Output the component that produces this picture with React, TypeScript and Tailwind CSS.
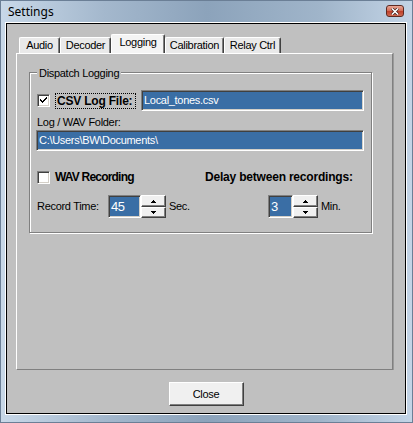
import React from 'react'

// sunken 3D edge used by edit boxes and check boxes
const sunken =
  'border border-t-[#808080] border-l-[#808080] border-b-white border-r-white shadow-[inset_1px_1px_0_#404040,inset_-1px_-1px_0_#d4d0c8]'

// raised 3D edge used by buttons
const raised =
  'border border-t-white border-l-white border-b-[#404040] border-r-[#404040] shadow-[inset_-1px_-1px_0_#808080]'

function CheckBox({ checked }: { checked?: boolean }) {
  return (
    <div className={`w-[13px] h-[13px] bg-white ${sunken} flex items-center justify-center shrink-0`}>
      {checked && (
        <svg width="9" height="9" viewBox="0 0 9 9" shapeRendering="crispEdges">
          <path d="M1 3h1v1h1v1h1V4h1V3h1V2h1V1h1v2H7v1H6v1H5v1H4v1H3V6H2V5H1z" fill="#000" />
        </svg>
      )}
    </div>
  )
}

function Spin() {
  return (
    <div className="flex flex-col w-[25px] h-[23px] shrink-0">
      <div className={`h-[12px] bg-[#f0f0f0] ${raised} flex items-center justify-center`}>
        <svg width="5" height="3" viewBox="0 0 5 3" shapeRendering="crispEdges">
          <path d="M2 0h1v1h1v1h1v1H0V2h1V1h1z" fill="#000" />
        </svg>
      </div>
      <div className={`h-[11px] bg-[#f0f0f0] ${raised} flex items-center justify-center`}>
        <svg width="5" height="3" viewBox="0 0 5 3" shapeRendering="crispEdges">
          <path d="M0 0h5v1H4v1H3v1H2V2H1V1H0z" fill="#000" />
        </svg>
      </div>
    </div>
  )
}

function Tab({ label, width, selected }: { label: string; width: string; selected?: boolean }) {
  return (
    <div
      className={`${width} ${
        selected ? 'h-[19px] bg-[#f4f4f4] pb-[3px]' : 'h-[16px] bg-[#e9e9e9]'
      } border-t border-l border-r border-t-white border-l-white border-r-[#404040] shadow-[inset_-1px_0_0_#808080] rounded-t-[2px] flex items-center justify-center text-[11px] leading-[13px]`}
    >
      {label}
    </div>
  )
}

export default function App() {
  return (
    <div className="w-[413px] h-[423px] flex flex-col border border-[#6b7f96] pl-[4px] pr-[5px] pb-[7px] bg-[linear-gradient(90deg,#c8d8e8_0%,#a4b8cd_25%,#8ca3bb_50%,#a0b5ca_78%,#c3d4e6_100%)] font-['Liberation_Sans',Arial,sans-serif] text-[11px] tracking-[-0.3px] text-black">
      {/* Title bar */}
      <div className="h-[21px] flex items-start justify-between pl-[3px] pr-[3px]">
        <span className="mt-[3px] text-[12px] leading-[16px] tracking-normal font-['Noto_Sans',sans-serif] text-black">
          Settings
        </span>
        <div className="mt-[4px] w-[18px] h-[12px] rounded-[3px] border border-[#5e2a22] bg-[linear-gradient(180deg,#e9a897_0%,#d4705b_45%,#c0412c_55%,#cf6a52_100%)] flex items-center justify-center">
          <svg width="8" height="7" viewBox="0 0 8 7">
            <path d="M1 0.5 L7 6.5 M7 0.5 L1 6.5" stroke="#3a1a16" strokeWidth="3" />
            <path d="M1 0.5 L7 6.5 M7 0.5 L1 6.5" stroke="#fff" strokeWidth="1.6" />
          </svg>
        </div>
      </div>

      {/* Client area */}
      <div className="flex-1 border border-white">
        <div className="h-full border border-black bg-[#c0c0c0] flex flex-col pt-[10px]">
          {/* Tab control */}
          <div className="ml-[9px] w-[377px] flex flex-col">
            <div className="h-[19px] flex items-end pl-[3px]">
              <Tab label="Audio" width="w-[41px]" />
              <Tab label="Decoder" width="w-[51px]" />
              <Tab label="Logging" width="w-[54px]" selected />
              <Tab label="Calibration" width="w-[59px]" />
              <Tab label="Relay Ctrl" width="w-[57px]" />
            </div>

            <div className="h-[317px] border border-t-white border-l-white border-r-[#808080] border-b-[#808080] shadow-[1px_0_0_#9a9a9a] pt-[18px] pl-[12px]">
              {/* Dispatch Logging group */}
              <div className="relative w-[343px] h-[161px] border border-[#808080] shadow-[inset_1px_1px_0_#fff,1px_1px_0_#fff] pl-[7px] pr-[7px] flex flex-col">
                <span className="absolute left-[7px] top-[-6px] px-[2px] bg-[#c0c0c0] leading-[13px]">
                  Dispatch Logging
                </span>

                <div className="mt-[17px] h-[21px] flex items-center">
                  <CheckBox checked />
                  <div className="ml-[5px] w-[81px] h-[16px] border border-dotted border-black flex items-center pl-[1px] text-[12px] font-bold tracking-[-0.2px] leading-[14px]">
                    CSV Log File:
                  </div>
                  <div className={`ml-[5px] flex-1 h-[21px] bg-[#3a6ea5] ${sunken} text-white flex items-center pl-[2px] leading-[13px]`}>
                    Local_tones.csv
                  </div>
                </div>

                <div className="mt-[5px] leading-[13px]">Log / WAV Folder:</div>

                <div className={`mt-[1px] -ml-[1px] h-[21px] bg-[#3a6ea5] ${sunken} text-white flex items-center pl-[2px] leading-[13px]`}>
                  C:\Users\BW\Documents\
                </div>

                <div className="mt-[18px] h-[16px] flex items-center">
                  <div className="w-[168px] flex items-center">
                    <CheckBox />
                    <span className="ml-[5px] text-[12px] font-bold tracking-[-0.8px] leading-[14px]">WAV Recording</span>
                  </div>
                  <span className="text-[12px] font-bold tracking-[-0.2px] leading-[14px]">Delay between recordings:</span>
                </div>

                <div className="mt-[10px] h-[23px] flex items-center">
                  <div className="w-[168px] flex items-center">
                    <span className="w-[71px] leading-[13px]">Record Time:</span>
                    <div className={`w-[33px] h-[23px] bg-[#3a6ea5] ${sunken} text-white text-[13px] tracking-[-0.5px] flex items-center pl-[2px]`}>
                      45
                    </div>
                    <Spin />
                    <span className="ml-[3px] leading-[13px]">Sec.</span>
                  </div>
                  <div className="pl-[63px] flex items-center">
                    <div className={`w-[25px] h-[23px] bg-[#3a6ea5] ${sunken} text-white text-[13px] flex items-center pl-[2px]`}>
                      3
                    </div>
                    <Spin />
                    <span className="ml-[3px] leading-[13px]">Min.</span>
                  </div>
                </div>
              </div>
            </div>
          </div>

          {/* Close button */}
          <div className="mt-[12px] flex justify-center">
            <div className={`w-[75px] h-[24px] bg-[#f0f0f0] ${raised} flex items-center justify-center leading-[13px]`}>
              Close
            </div>
          </div>
        </div>
      </div>
    </div>
  )
}
